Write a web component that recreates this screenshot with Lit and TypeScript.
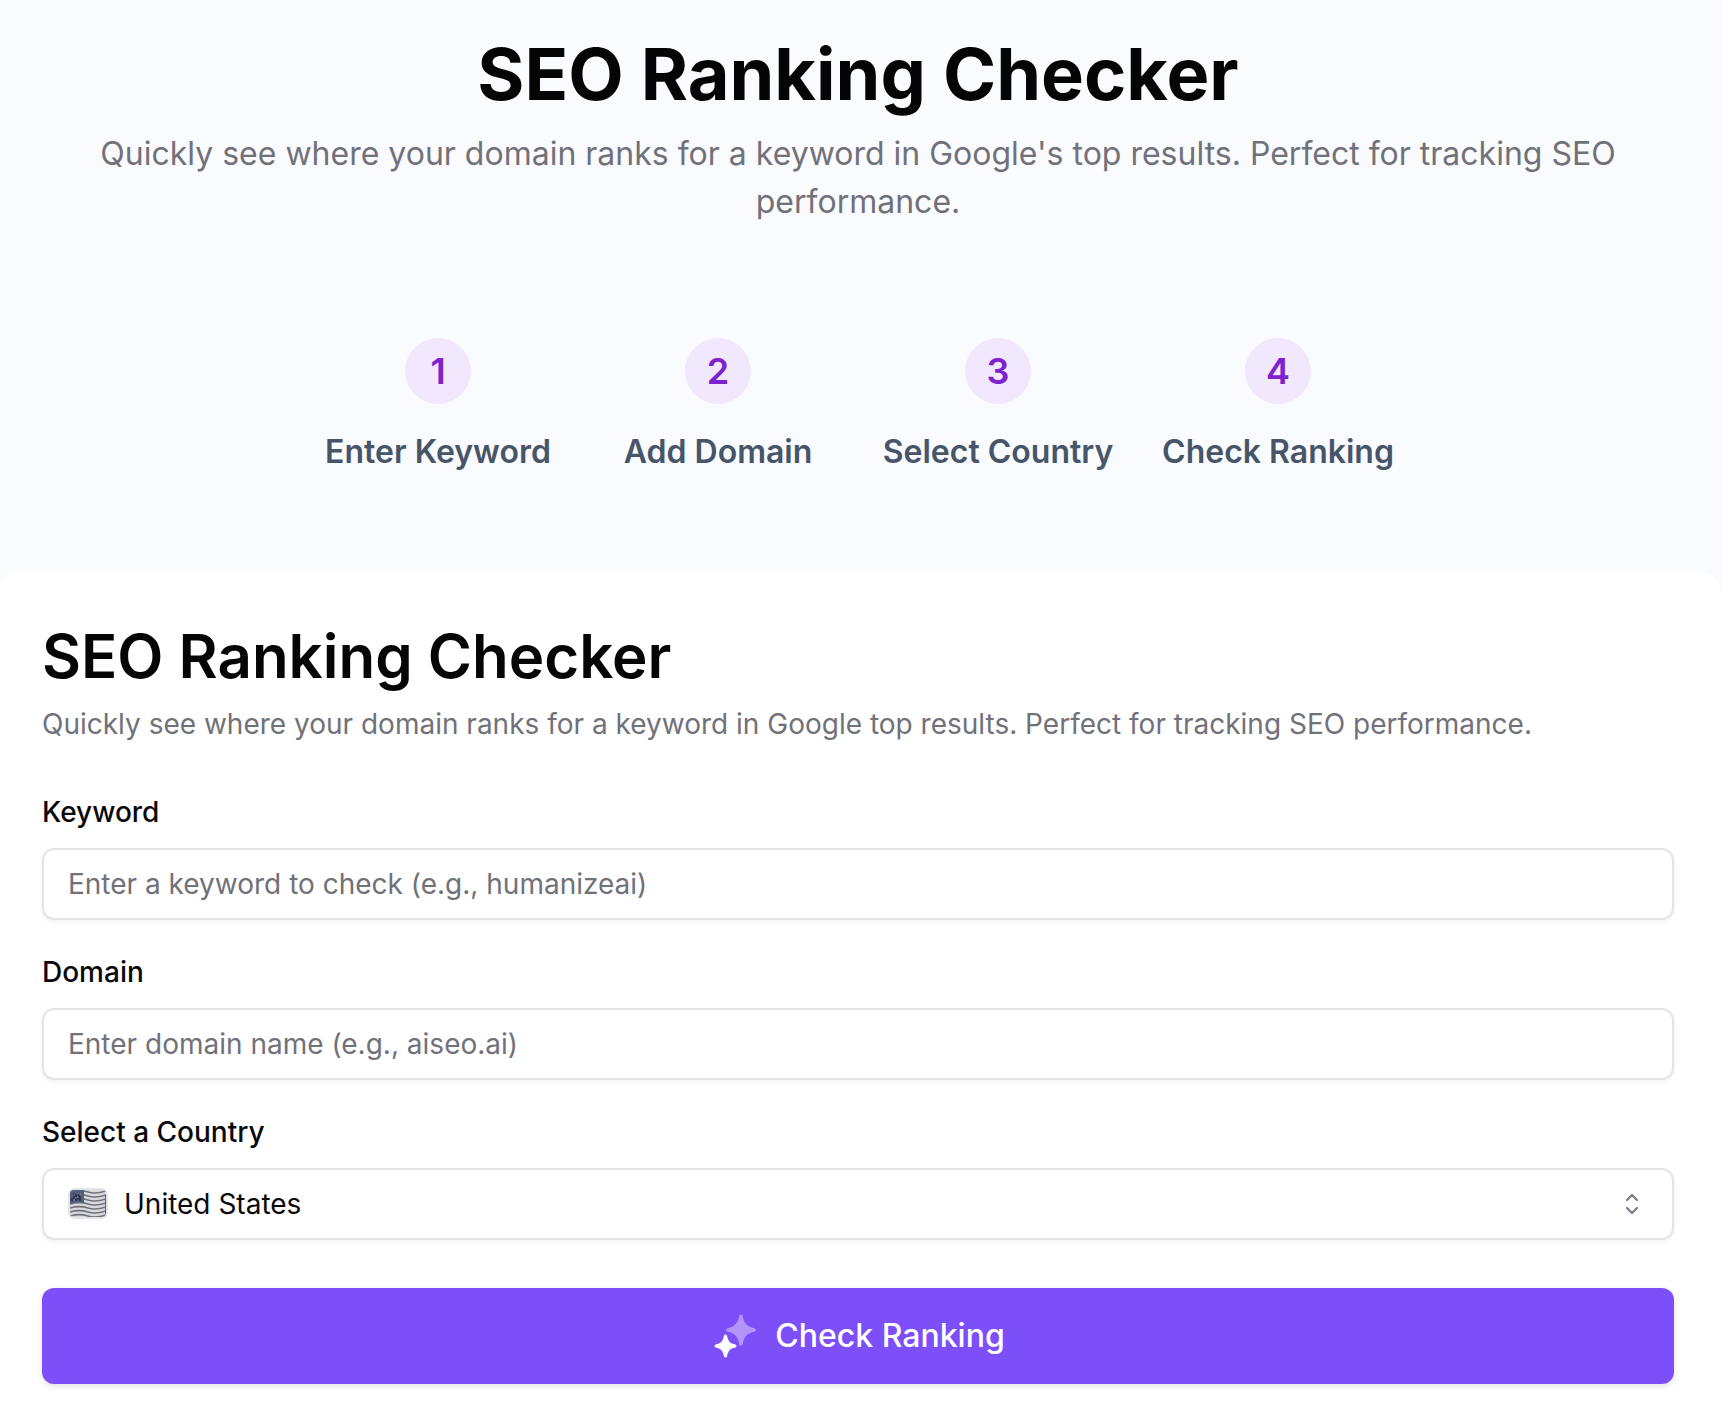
import { LitElement, html, css, svg } from "lit";
import { customElement, state } from "lit/decorators.js";

const STEPS = ["Enter Keyword", "Add Domain", "Select Country", "Check Ranking"];
const COUNTRIES = ["United States", "United Kingdom", "Canada", "Australia"];

const flagStripes = [3, 7, 11, 15, 19, 23, 27].map(
  (y) => svg`<path d="M2 ${y + 1} C9 ${y - 1} 14 ${y - 1} 20 ${y + 1} S32 ${y + 2} 38 ${y}" />`
);

@customElement("app-root")
export class AppRoot extends LitElement {
  @state() private keyword = "";
  @state() private domain = "";

  static styles = css`
    :host {
      display: block;
      min-height: 100vh;
      overflow: hidden;
      background: #fafbff;
      color: #09090b;
      font-family: Inter, "Liberation Sans", sans-serif;
      font-optical-sizing: none;
      font-size: 28px;
      line-height: 40px;
    }
    * {
      box-sizing: border-box;
    }
    h1,
    h2,
    p,
    ol {
      margin: 0;
      padding: 0;
    }
    h1,
    h2 {
      color: #050505;
    }
    .page {
      margin-left: -6px;
    }
    .intro {
      padding: 34px 96px 96px;
      text-align: center;
    }
    .intro h1 {
      font-size: 72px;
      line-height: 80px;
      font-weight: 700;
    }
    .intro p {
      margin-top: 16px;
      font-size: 32px;
      line-height: 48px;
      color: #71717a;
    }
    .steps {
      display: grid;
      grid-template-columns: repeat(4, 248px);
      justify-content: center;
      gap: 32px;
      margin-top: 112px;
      list-style: none;
    }
    .step {
      display: flex;
      flex-direction: column;
      align-items: center;
      gap: 24px;
      font-size: 32px;
      line-height: 48px;
      font-weight: 600;
      color: #475569;
      white-space: nowrap;
    }
    .badge {
      display: grid;
      place-items: center;
      width: 66px;
      height: 66px;
      border-radius: 50%;
      background: #f2e8fe;
      color: #7e22ce;
      font-size: 36px;
    }
    .card {
      padding: 48px 48px 32px;
      border-radius: 24px 24px 0 0;
      background: #fff;
    }
    .card h2 {
      font-size: 60px;
      line-height: 72px;
      font-weight: 600;
    }
    .card p {
      margin-top: 12px;
      color: #71717a;
    }
    form {
      display: flex;
      flex-direction: column;
      gap: 32px;
      margin-top: 48px;
    }
    .field {
      display: flex;
      flex-direction: column;
      gap: 16px;
    }
    label {
      font-weight: 500;
    }
    input,
    select {
      display: block;
      width: 100%;
      height: 72px;
      margin: 0;
      padding: 0 24px;
      border: 2px solid #e4e4e7;
      border-radius: 12px;
      background: #fff;
      box-shadow: 0 2px 4px rgba(0, 0, 0, 0.05);
      color: #09090b;
      font: inherit;
      appearance: none;
    }
    input::placeholder {
      color: #71717a;
      opacity: 1;
    }
    select {
      padding-left: 80px;
    }
    .picker {
      position: relative;
    }
    .flag,
    .chevrons {
      position: absolute;
      top: 50%;
      transform: translateY(-50%);
      pointer-events: none;
    }
    .flag {
      left: 26px;
    }
    .chevrons {
      right: 27px;
    }
    button {
      display: flex;
      align-items: center;
      justify-content: center;
      gap: 16px;
      height: 96px;
      margin-top: 16px;
      border: 0;
      border-radius: 12px;
      background: #7d4ff9;
      box-shadow: 0 2px 6px rgba(0, 0, 0, 0.12);
      color: #fff;
      font: inherit;
      font-size: 32px;
      font-weight: 500;
    }
  `;

  render() {
    return html`
      <main class="page">
        <header class="intro">
          <h1>SEO Ranking Checker</h1>
          <p>
            Quickly see where your domain ranks for a keyword in Google's top results. Perfect for
            tracking SEO performance.
          </p>
          <ol class="steps">
            ${STEPS.map(
              (name, i) => html`<li class="step"><span class="badge">${i + 1}</span>${name}</li>`
            )}
          </ol>
        </header>
        <section class="card">
          <h2>SEO Ranking Checker</h2>
          <p>
            Quickly see where your domain ranks for a keyword in Google top results. Perfect for
            tracking SEO performance.
          </p>
          <form @submit=${(e: Event) => e.preventDefault()}>
            <div class="field">
              <label for="keyword">Keyword</label>
              <input
                id="keyword"
                type="text"
                placeholder="Enter a keyword to check (e.g., humanizeai)"
                .value=${this.keyword}
                @input=${(e: Event) => (this.keyword = (e.target as HTMLInputElement).value)}
              />
            </div>
            <div class="field">
              <label for="domain">Domain</label>
              <input
                id="domain"
                type="text"
                placeholder="Enter domain name (e.g., aiseo.ai)"
                .value=${this.domain}
                @input=${(e: Event) => (this.domain = (e.target as HTMLInputElement).value)}
              />
            </div>
            <div class="field">
              <label for="country">Select a Country</label>
              <div class="picker">
                <select id="country">
                  ${COUNTRIES.map((c) => html`<option>${c}</option>`)}
                </select>
                <svg class="flag" width="40" height="32" viewBox="0 0 40 32" aria-hidden="true">
                  <defs>
                    <clipPath id="cloth"><rect x="2" y="2" width="36" height="27" rx="4" /></clipPath>
                  </defs>
                  <rect width="40" height="31" rx="7" fill="#e4e4ea" />
                  <g clip-path="url(#cloth)">
                    <rect width="40" height="32" fill="#d9d9e0" />
                    <g fill="none" stroke="#73737e" stroke-width="1.6">${flagStripes}</g>
                    <path d="M2 2 H16 V15 Q9 13 2 16 Z" fill="#50607c" />
                    <path
                      d="M4 13 V10 M6 8 V11 M8 6 V9 M8 11 V13 M10 7 L12 9 V13 M10 10 V12 M5 6 H6"
                      stroke="#211d2e"
                      stroke-width="1.2"
                      fill="none"
                    />
                    <path d="M6 12 H7 M9 9 H10 M12 6 H13" stroke="#9a93b4" stroke-width="1" />
                    <path d="M37.5 7 V26" stroke="#62626d" />
                  </g>
                </svg>
                <svg
                  class="chevrons"
                  width="30"
                  height="30"
                  viewBox="0 0 30 30"
                  fill="none"
                  stroke="#7c7c85"
                  stroke-width="2.2"
                  stroke-linecap="round"
                  stroke-linejoin="round"
                  aria-hidden="true"
                >
                  <path d="M10 11 L15 6 L20 11 M10 19 L15 24 L20 19" />
                </svg>
              </div>
            </div>
            <button type="submit">
              <svg width="48" height="48" viewBox="-3 -2 48 48" fill="#fff" aria-hidden="true">
                <path
                  opacity="0.4"
                  d="M25.500 1 Q27 0 28.500 1 C29.500 9 32 12 41 14.500 Q43 16 41 17.500 C33 19.500 30 22 28.500 31 Q27 32.500 25.500 31 C24 22 21 19.500 13 17.500 Q11 16 13 14.500 C21 12.500 24 9 25.500 1 Z"
                />
                <path
                  d="M10 21.500 Q11.500 19.500 13 21.500 C14 27 16 29.500 21.500 30.500 Q23.500 32 21.500 33.500 C16 34.500 14 37 13 42.500 Q11.500 44.500 10 42.500 C9 37 7 34.500 1.500 33.500 Q-0.500 32 1.500 30.500 C7 29.500 9 27 10 21.500 Z"
                />
              </svg>
              <span>Check Ranking</span>
            </button>
          </form>
        </section>
      </main>
    `;
  }
}
